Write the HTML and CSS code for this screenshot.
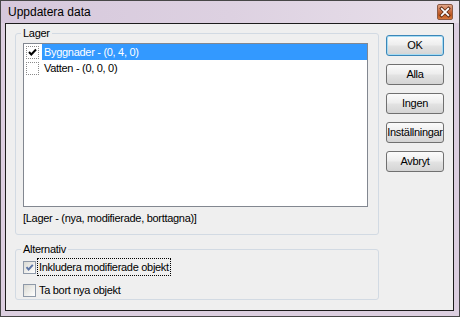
FILE: index.html
```html
<!DOCTYPE html>
<html lang="sv">
<head>
    <meta charset="UTF-8">
    <title>Uppdatera data</title>
    <link rel="stylesheet" href="styles.css">
</head>
<body>
    <div class="window">
        <!-- Title bar -->
        <div class="titlebar">
            <span class="title">Uppdatera data</span>
            <span class="close-btn">
                <svg width="14" height="14" viewBox="0 0 14 14">
                    <path d="M3.5 3.5 L10.5 10.5 M10.5 3.5 L3.5 10.5" stroke="#5a2a14" stroke-width="3.2" stroke-linecap="square"/>
                    <path d="M3.8 3.8 L10.2 10.2 M10.2 3.8 L3.8 10.2" stroke="#fff" stroke-width="1.8" stroke-linecap="square"/>
                </svg>
            </span>
        </div>

        <div class="frame">
            <div class="client">
                <div class="left-col">
                    <!-- Layers -->
                    <fieldset class="group group-layers">
                        <legend>Lager</legend>
                        <div class="listbox">
                            <div class="list-item selected">
                                <span class="list-check">
                                    <svg width="11" height="11" viewBox="0 0 11 11">
                                        <path d="M2 5 L4.3 7.5 L9 2.5" fill="none" stroke="#000" stroke-width="2"/>
                                    </svg>
                                </span>
                                <span class="item-text">Byggnader - (0, 4, 0)</span>
                            </div>
                            <div class="list-item">
                                <span class="list-check"></span>
                                <span class="item-text">Vatten - (0, 0, 0)</span>
                            </div>
                        </div>
                        <div class="list-note">[Lager - (nya, modifierade, borttagna)]</div>
                    </fieldset>

                    <!-- Options -->
                    <fieldset class="group group-options">
                        <legend>Alternativ</legend>
                        <div class="option">
                            <span class="checkbox checked">
                                <svg width="11" height="11" viewBox="0 0 11 11">
                                    <path d="M2.5 5.2 L4.6 7.5 L8.8 2.8" fill="none" stroke="#5b74a6" stroke-width="1.9"/>
                                </svg>
                            </span>
                            <span class="option-text focused">Inkludera modifierade objekt</span>
                        </div>
                        <div class="option">
                            <span class="checkbox"></span>
                            <span class="option-text">Ta bort nya objekt</span>
                        </div>
                    </fieldset>
                </div>

                <!-- Buttons -->
                <div class="buttons">
                    <div class="btn default"><span>OK</span></div>
                    <div class="btn"><span>Alla</span></div>
                    <div class="btn"><span>Ingen</span></div>
                    <div class="btn"><span>Inställningar</span></div>
                    <div class="btn"><span>Avbryt</span></div>
                </div>
            </div>
        </div>
    </div>
</body>
</html>
```

FILE: styles.css
```css
* {
    box-sizing: border-box;
}

body {
    margin: 0;
    font-family: "Liberation Sans", Arial, sans-serif;
    font-size: 11px;
    letter-spacing: -0.3px;
    color: #000;
    background: #fff;
}

.window {
    width: 460px;
    height: 317px;
    display: flex;
    flex-direction: column;
    border: 1px solid #474747;
    background: #dccfe0;
}

/* Title bar */
.titlebar {
    height: 22px;
    display: flex;
    align-items: center;
    padding-left: 7px;
    background: linear-gradient(to right, #d6c8dc, #ddd1e1 50%, #e8e0ea);
}

.title {
    font-size: 12px;
    letter-spacing: 0;
    color: #000;
}

.close-btn {
    margin-left: auto;
    margin-right: 6px;
    width: 16px;
    height: 16px;
    display: flex;
    align-items: center;
    justify-content: center;
    border: 1px solid #8c5a44;
    border-radius: 2px;
    background: linear-gradient(#e2a688, #c86a3e 45%, #b8541e 70%, #d8783c);
}

.frame {
    flex: 1;
    display: flex;
    padding: 0 5px 5px 4px;
}

.client {
    flex: 1;
    display: flex;
    gap: 7px;
    padding: 3px 0 0 9px;
    border: 1px solid #1c1c1c;
    background: #efefef;
}

.left-col {
    width: 364px;
    display: flex;
    flex-direction: column;
    gap: 8px;
}

/* Group boxes */
.group {
    margin: 0;
    padding: 3px 10px 9px 7px;
    border: 1px solid #d2dae3;
    border-radius: 3px;
    min-width: 0;
}

.group legend {
    padding: 0 2px;
    margin-left: -2px;
    line-height: 13px;
}

.listbox {
    height: 164px;
    border: 1px solid #828790;
    background: #fff;
}

.list-item {
    height: 16px;
    display: flex;
    align-items: center;
    padding-left: 2px;
}

.list-check {
    width: 13px;
    height: 13px;
    display: flex;
    align-items: center;
    justify-content: center;
    border: 1px dotted #8a8a8a;
    background: #fff;
}

.item-text {
    flex: 1;
    height: 16px;
    line-height: 16px;
    margin-left: 3px;
    padding-left: 2px;
}

.list-item.selected .item-text {
    background: #3399ff;
    color: #fff;
}

.list-note {
    margin-top: 5px;
    line-height: 13px;
}

.group-options {
    padding-bottom: 1px;
}

.option {
    height: 16px;
    display: flex;
    align-items: center;
    margin-bottom: 7px;
}

.option:last-child {
    margin-bottom: 0;
}

.checkbox {
    width: 13px;
    height: 13px;
    display: flex;
    align-items: center;
    justify-content: center;
    border: 1px solid #8e99a8;
    background: linear-gradient(135deg, #d9d9d3, #f4f4f2 70%, #fff);
}

.option-text {
    margin-left: 2px;
    padding: 1px 1px;
    line-height: 14px;
}

.option-text.focused {
    outline: 1px dotted #000;
}

/* Buttons */
.buttons {
    width: 58px;
    margin-top: 8px;
    display: flex;
    flex-direction: column;
    gap: 8px;
}

.btn {
    height: 21px;
    border: 1px solid #707070;
    border-radius: 3px;
    background: linear-gradient(#fbfbfb, #eeeeee 45%, #e2e2e2 55%, #d4d4d4);
    overflow: hidden;
}

.btn span {
    display: block;
    line-height: 19px;
    text-align: center;
    white-space: nowrap;
}

.btn.default {
    border-color: #3b86b8;
    box-shadow: inset 0 0 0 1px #a6dcf3;
}
```
